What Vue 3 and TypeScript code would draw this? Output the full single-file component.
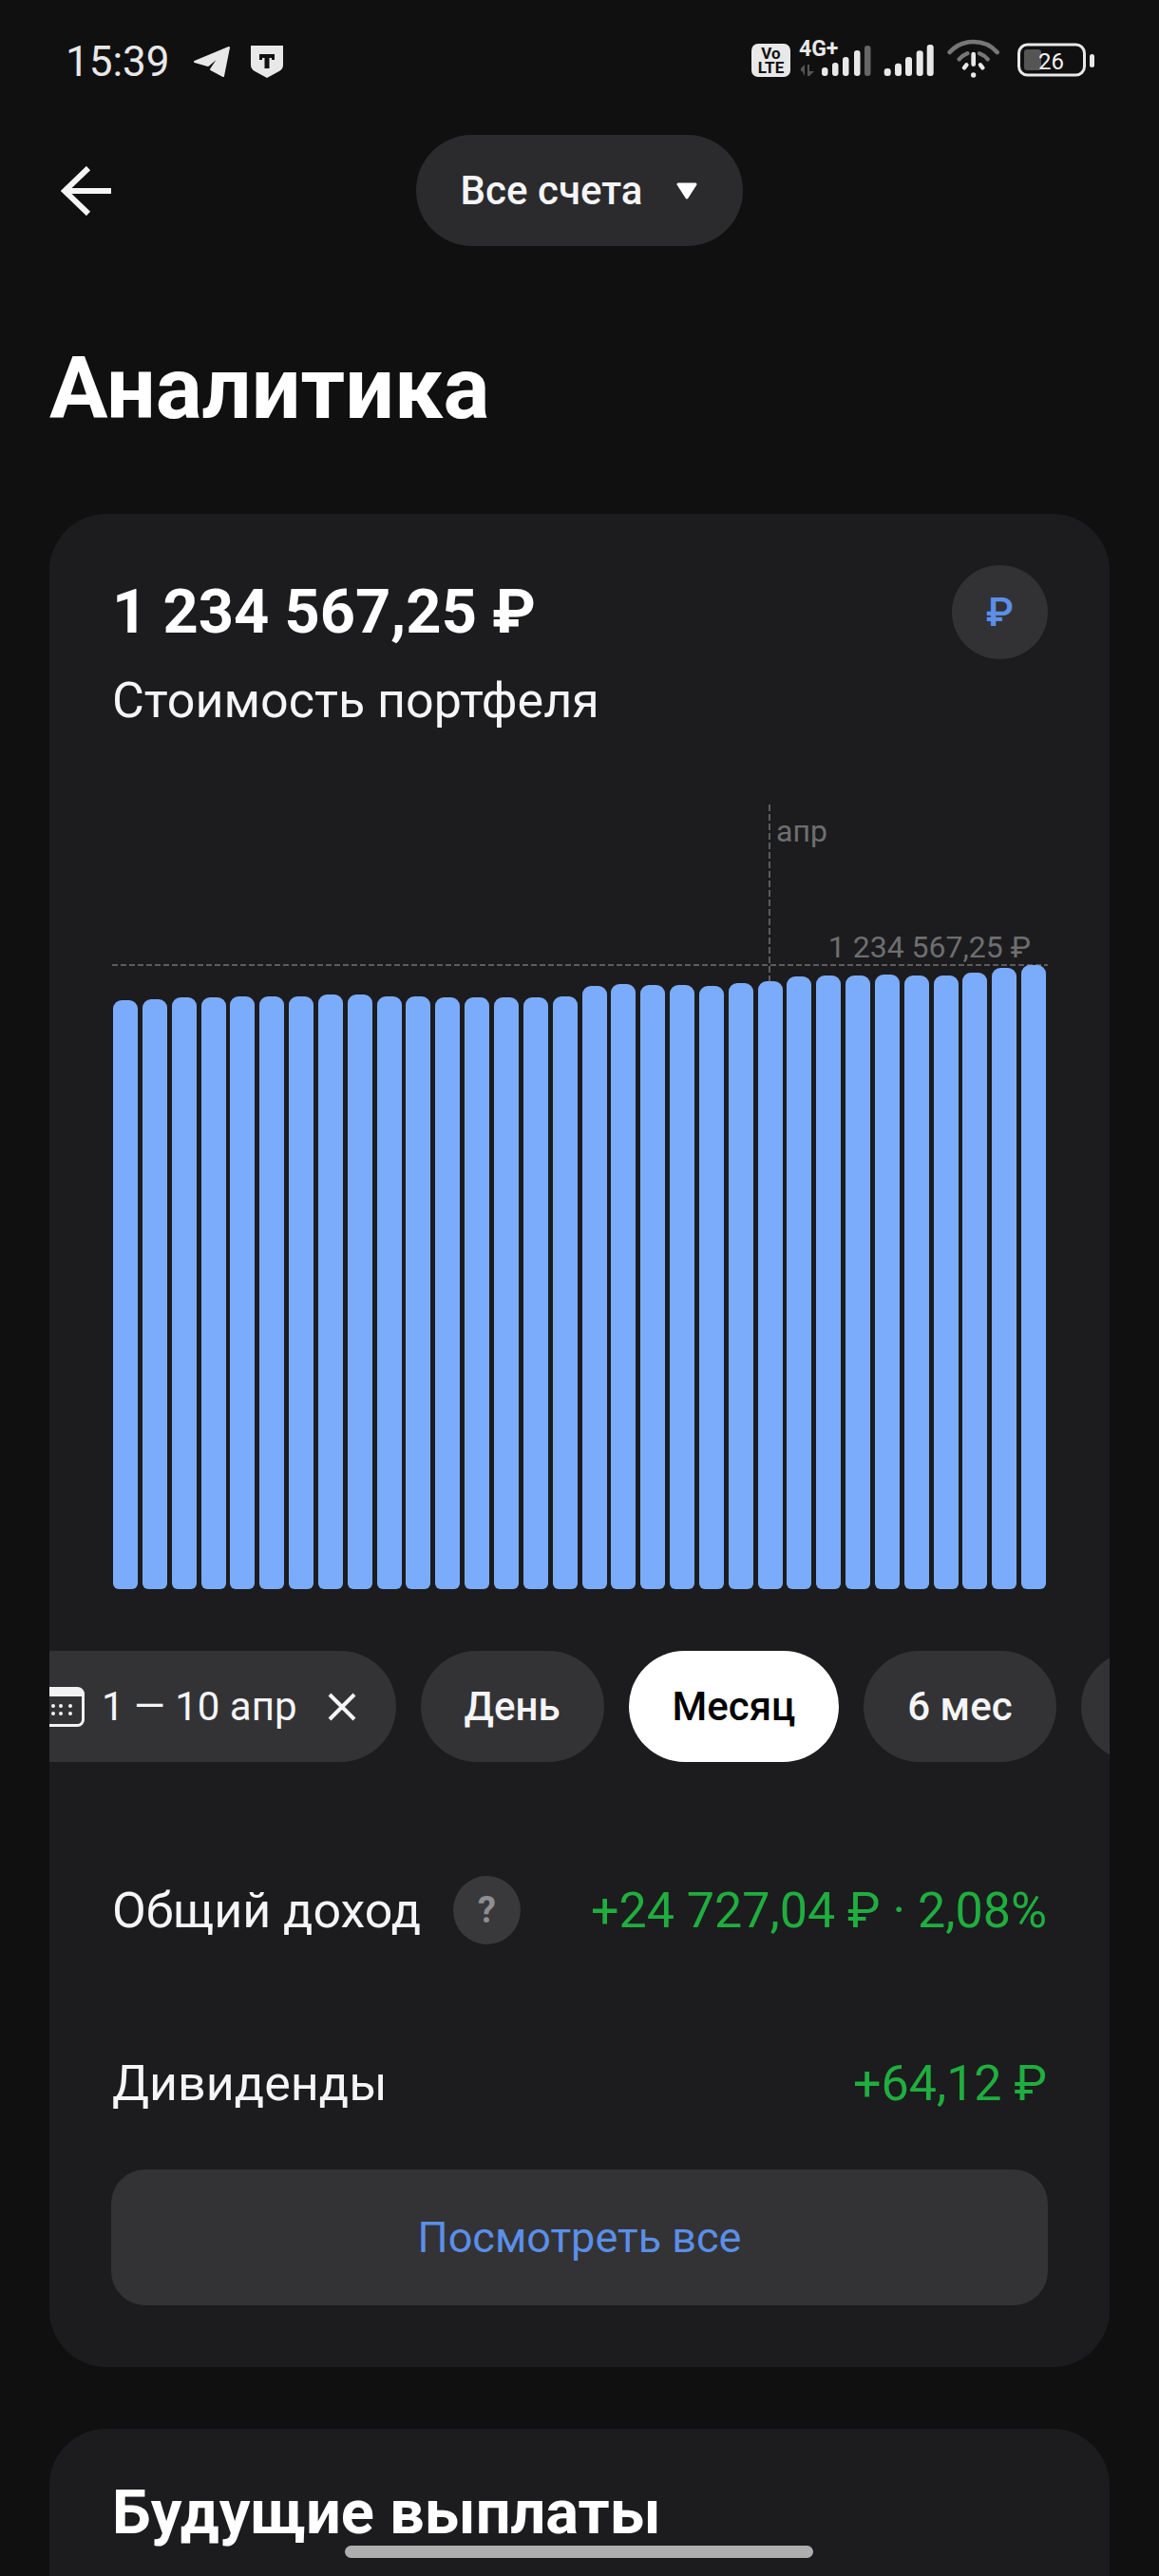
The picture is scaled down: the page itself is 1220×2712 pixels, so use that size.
<template>
  <div class="screen">
    <div class="status">
      <span class="time">15:39</span>
      <svg class="tg" width="40" height="34" viewBox="0 0 40 34">
        <path d="M38 2 2 17 16 21 29 10 19 25 32 32Z" fill="#e8e8e8" stroke="#e8e8e8" stroke-width="2" stroke-linejoin="round" />
      </svg>
      <svg class="shield" width="34" height="34" viewBox="0 0 34 34">
        <path d="M0 0H34V20C34 24 32 26 28 28L17 34 6 28C2 26 0 24 0 20Z" fill="#e8e8e8" />
        <path d="M9 9H25V15H22V13H19.500V24H14.500V13H12V15H9Z" fill="#111" />
      </svg>

      <div class="status-right">
        <svg width="41" height="42" viewBox="0 0 41 42">
          <rect y="5" width="41" height="35" rx="7" fill="#e8e8e8" />
          <text x="20.500" y="21" class="sys-text" font-size="17" text-anchor="middle" fill="#111">Vo</text>
          <text x="20.500" y="36" class="sys-text" font-size="17" text-anchor="middle" fill="#111">LTE</text>
        </svg>
        <svg class="net" width="75" height="42" viewBox="0 0 75 42">
          <text x="0" y="18" class="sys-text" font-size="23" fill="#e8e8e8">4G+</text>
          <path d="M2 31 6 27V39ZM9 27H11V34L16 34 11 39H9ZM2 31H6V34H2Z" fill="#555" />
          <rect v-for="(b, i) in netBars" :key="i" :x="b.x" :y="b.y" width="6.500" :height="39 - b.y" rx="3" :fill="i === 4 ? '#666' : '#e8e8e8'" />
        </svg>
        <svg width="53" height="42" viewBox="0 0 53 42">
          <rect v-for="(b, i) in simBars" :key="i" :x="b.x" :y="b.y" width="7" :height="39 - b.y" rx="3" fill="#e8e8e8" />
        </svg>
        <svg width="56" height="42" viewBox="24 16 168 126">
          <path d="M32 58C70 14 144 14 182 58" fill="none" stroke="#777" stroke-width="14" stroke-linecap="round" />
          <path d="M62 80C70 70 80 65 88 62M126 62C134 65 144 70 152 80" fill="none" stroke="#777" stroke-width="13" stroke-linecap="round" />
          <path d="M107 64V96" stroke="#e8e8e8" stroke-width="14" stroke-linecap="round" />
          <path d="M78 107 85 98M136 107 129 98" stroke="#e8e8e8" stroke-width="13" stroke-linecap="round" />
          <circle cx="107" cy="130" r="8" fill="#e8e8e8" />
        </svg>
        <svg class="battery" width="81" height="42" viewBox="0 0 81 42">
          <rect x="1.500" y="6" width="69" height="32" rx="9" fill="none" stroke="#e8e8e8" stroke-width="3" />
          <rect x="7" y="11" width="18" height="22" rx="3" fill="#555" />
          <text x="22" y="32" class="batt-text" font-size="24" fill="#f2f2f2">26</text>
          <rect x="76" y="16" width="5" height="14" rx="2.500" fill="#e8e8e8" />
        </svg>
      </div>
    </div>

    <div class="top-bar">
      <svg class="back" width="54" height="52" viewBox="0 0 54 52">
        <path d="M53 26H5M29 2 4 26 29 50" fill="none" stroke="#f5f5f5" stroke-width="6" />
      </svg>
      <div class="account">
        <span>Все счета</span>
        <svg width="22" height="18" viewBox="0 0 22 18">
          <path d="M2 2H20L11 16Z" fill="#fff" stroke="#fff" stroke-width="3" stroke-linejoin="round" />
        </svg>
      </div>
    </div>

    <h1 class="title">Аналитика</h1>

    <section class="card main-card">
      <div class="head">
        <div>
          <div class="amount">1 234 567,25 ₽</div>
          <div class="amount-label">Стоимость портфеля</div>
        </div>
        <div class="currency">₽</div>
      </div>

      <div class="chart">
        <div class="v-line"></div>
        <div class="h-line"></div>
        <span class="month">апр</span>
        <span class="last-value">1 234 567,25 ₽</span>
        <div class="bars">
          <div v-for="(top, i) in barTops" :key="i" class="bar" :style="{ height: chartBottom - top + 'px' }"></div>
        </div>
      </div>

      <div class="chips-row">
        <div class="chips">
          <div class="chip date-chip">
            <svg width="48" height="42" viewBox="0 0 48 42">
              <rect x="1.500" y="1.500" width="45" height="39" rx="6" fill="none" stroke="#f2f2f2" stroke-width="3" />
              <path d="M1 8C1 3 3 1 7 1H41C45 1 47 3 47 8V10H1Z" fill="#f2f2f2" />
              <circle v-for="d in calDots" :key="d.x + '-' + d.y" :cx="d.x" :cy="d.y" r="2" fill="#f2f2f2" />
            </svg>
            <span>1 — 10 апр</span>
            <svg class="chip-x" width="30" height="30" viewBox="0 0 30 30">
              <path d="M2 2 28 28M28 2 2 28" stroke="#f5f5f5" stroke-width="4" />
            </svg>
          </div>
          <div v-for="p in periods" :key="p" class="chip" :class="{ active: p === 'Месяц' }">{{ p }}</div>
          <div class="chip"></div>
        </div>
      </div>

      <div class="row first-row">
        <div class="row-name">
          <span>Общий доход</span>
          <span class="help">?</span>
        </div>
        <span class="gain">+24 727,04 ₽ · 2,08%</span>
      </div>
      <div class="row second-row">
        <span>Дивиденды</span>
        <span class="gain">+64,12 ₽</span>
      </div>

      <button class="see-all">Посмотреть все</button>
    </section>

    <section class="card next-card">
      <h2>Будущие выплаты</h2>
    </section>

    <div class="home-bar"></div>
  </div>
</template>

<script setup lang="ts">
const chartBottom = 1673;

// top edge of each bar in screen pixels, read off the chart
const barTops: number[] = [
  1052.7, 1052.3, 1050, 1049.7, 1049.3, 1049.3, 1048.7, 1047, 1047, 1049.3, 1049.3, 1050, 1050.3, 1050.3, 1049.7, 1049.3,
  1038, 1036, 1037, 1037, 1038, 1035, 1033, 1028, 1027, 1027, 1026, 1027, 1027, 1024, 1019, 1016,
];

const netBars = [
  { x: 24, y: 30 },
  { x: 35, y: 25 },
  { x: 46, y: 19 },
  { x: 58, y: 12 },
  { x: 69, y: 7 },
];

const simBars = [
  { x: 0.7, y: 31 },
  { x: 12, y: 25.7 },
  { x: 23, y: 19 },
  { x: 34.7, y: 12.3 },
  { x: 45.7, y: 6 },
];

const calDots = [15, 23, 33].flatMap((x) => [20, 28].map((y) => ({ x, y })));

const periods: string[] = ["День", "Месяц", "6 мес"];
</script>

<style>
html,
body {
  margin: 0;
  background: #101011;
}
</style>

<style scoped>
.screen {
  position: relative;
  width: 1220px;
  height: 2712px;
  overflow: hidden;
  background: #101011;
  color: #f5f5f7;
  font-family: Roboto, "Noto Sans", sans-serif;
}

.status {
  display: flex;
  align-items: center;
  height: 42px;
  padding: 41px 68px 0 69px;
}

.time {
  margin-top: 6px;
  font-size: 44px;
  line-height: 42px;
  color: #e8e8e8;
}

.tg {
  margin: 6px 0 0 24px;
}

.shield {
  margin: 6px 0 0 21px;
}

.status-right {
  display: flex;
  align-items: center;
  gap: 14px;
  margin-left: auto;
}

.net {
  margin-left: -5px;
  overflow: visible;
}

.battery {
  margin-left: 4px;
}

.sys-text {
  font-family: Roboto, sans-serif;
  font-weight: 700;
}

.batt-text {
  font-family: Roboto, sans-serif;
  font-weight: 400;
}

.top-bar {
  display: grid;
  grid-template-columns: 1fr auto 1fr;
  align-items: center;
  margin-top: 59px;
}

.back {
  margin-left: 64px;
}

.account {
  display: flex;
  align-items: center;
  gap: 36px;
  height: 117px;
  padding: 0 48px 0 47px;
  border-radius: 59px;
  background: #2b2b2d;
  font-size: 42px;
  font-weight: 500;
}

.title {
  margin: 98px 0 0 52px;
  font-size: 91.500px;
  line-height: 104px;
  font-weight: 700;
  color: #fff;
}

.card {
  margin: 0 52px;
  border-radius: 60px;
  background: #1c1c1e;
}

.main-card {
  margin-top: 80px;
  padding-bottom: 65px;
  overflow: hidden;
}

.head {
  display: flex;
  justify-content: space-between;
  padding: 63px 65px 0 66px;
  height: 181px;
}

.amount {
  font-size: 65px;
  line-height: 80px;
  font-weight: 700;
  color: #fff;
}

.amount-label {
  margin-top: 24px;
  font-size: 52px;
  line-height: 60px;
}

.currency {
  display: flex;
  align-items: center;
  justify-content: center;
  width: 101px;
  height: 99px;
  margin-top: -9px;
  border-radius: 50%;
  background: #323235;
  color: #5b8fe8;
  font-size: 42px;
  font-weight: 500;
}

.chart {
  position: relative;
  height: 826px;
  margin: 62px 65px 0 66px;
}

.v-line {
  position: absolute;
  left: 691px;
  top: 0;
  width: 2px;
  height: 186px;
  background: repeating-linear-gradient(180deg, #5c5c5e 0 7px, transparent 7px 10px);
}

.h-line {
  position: absolute;
  left: 0;
  right: 0;
  top: 168px;
  height: 2px;
  background: repeating-linear-gradient(90deg, #5c5c5e 0 6px, transparent 6px 9px);
}

.month {
  position: absolute;
  left: 699px;
  top: 9px;
  font-size: 32px;
  line-height: 38px;
  color: #6e6e70;
}

.last-value {
  position: absolute;
  right: 18px;
  top: 131px;
  font-size: 32px;
  line-height: 38px;
  color: #6e6e70;
}

.bars {
  position: absolute;
  left: 1px;
  right: 2px;
  bottom: 0;
  display: flex;
  align-items: flex-end;
  gap: 4.840px;
}

.bar {
  flex: 1;
  border-radius: 9px 9px 6px 6px;
  background: #7bacfc;
}

.chips-row {
  margin-top: 65px;
  overflow: hidden;
}

.chips {
  display: flex;
  gap: 26px;
  margin-left: -57px;
  width: 1400px;
}

.chip {
  display: flex;
  align-items: center;
  height: 117px;
  padding: 0 46px;
  border-radius: 59px;
  background: #333335;
  font-size: 42px;
  font-weight: 500;
  white-space: nowrap;
}

.chip:last-child {
  width: 120px;
}

.date-chip {
  gap: 18px;
  padding-right: 42px;
  font-weight: 400;
}

.chip-x {
  margin-left: 14px;
}

.chip.active {
  background: #fff;
  color: #000;
}

.row {
  display: flex;
  align-items: center;
  justify-content: space-between;
  height: 72px;
  padding: 0 66px;
  font-size: 52px;
}

.first-row {
  margin-top: 120px;
}

.second-row {
  margin-top: 110px;
}

.row-name {
  display: flex;
  align-items: center;
  gap: 34px;
}

.help {
  display: flex;
  align-items: center;
  justify-content: center;
  width: 71px;
  height: 72px;
  border-radius: 50%;
  background: #39393b;
  color: #8e8e93;
  font-size: 38px;
  font-weight: 700;
}

.gain {
  color: #1fae3f;
}

.see-all {
  display: block;
  width: 986px;
  height: 143px;
  margin: 55px 0 0 65px;
  border: 0;
  border-radius: 36px;
  background: #333335;
  color: #5b8fe8;
  font-family: inherit;
  font-size: 45px;
}

.next-card {
  margin-top: 65px;
  height: 300px;
  padding: 51px 66px 0;
}

.next-card h2 {
  margin: 0;
  font-size: 65px;
  line-height: 74px;
  font-weight: 700;
  color: #fff;
}

.home-bar {
  position: absolute;
  left: 363px;
  top: 2680px;
  width: 493px;
  height: 13px;
  border-radius: 7px;
  background: #aeaeae;
}
</style>
